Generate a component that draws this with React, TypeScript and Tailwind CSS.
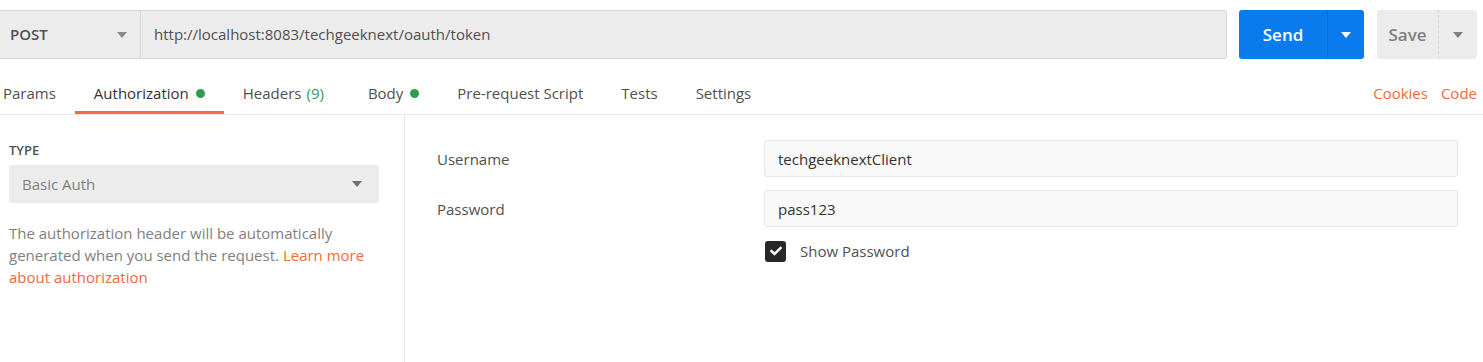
import { FaCheck } from "react-icons/fa";

const Caret = ({ className }: { className: string }) => (
  <svg width="10" height="6" viewBox="0 0 10 6" className={className}>
    <path d="M0 0h10L5 6z" fill="currentColor" />
  </svg>
);

const Dot = () => <span className="ml-[7px] inline-block size-[9px] rounded-full bg-[#2e9e4e]" />;

const tabs = [
  { label: "Params" },
  { label: "Authorization", dot: true, active: true },
  { label: "Headers", count: "(9)" },
  { label: "Body", dot: true },
  { label: "Pre-request Script" },
  { label: "Tests" },
  { label: "Settings" },
];

export default function App() {
  return (
    <div className="h-[362px] w-[1483px] overflow-hidden bg-white font-['Open_Sans',sans-serif] text-[15px] text-[#505050]">
      {/* request bar */}
      <div className="flex h-[59px] items-stretch pt-[10px] pr-[6px]">
        <div className="flex flex-1 rounded-r-[3px] border border-l-0 border-[#d6d6d6] bg-[#ececec]">
          <div className="flex w-[141px] items-center justify-between border-r border-[#d6d6d6] pl-[10px] pr-[13px]">
            <span className="font-semibold">POST</span>
            <Caret className="text-[#8a8a8a]" />
          </div>
          <div className="flex items-center pl-[13px]">http://localhost:8083/techgeeknext/oauth/token</div>
        </div>
        <div className="ml-[12px] flex w-[125px] overflow-hidden rounded-[3px] bg-[#097bed] text-white">
          <div className="flex w-[88px] items-center justify-center text-[17px] font-semibold">Send</div>
          <div className="flex flex-1 items-center justify-center border-l border-[#0a6cd1]">
            <Caret className="text-white" />
          </div>
        </div>
        <div className="ml-[13px] flex w-[100px] rounded-[3px] bg-[#ececec] text-[#808080]">
          <div className="flex w-[61px] items-center justify-center text-[17px] font-semibold">Save</div>
          <div className="flex flex-1 items-center justify-center border-l border-dashed border-[#d6d6d6]">
            <Caret className="text-[#808080]" />
          </div>
        </div>
      </div>

      {/* tabs */}
      <div className="flex h-[56px] items-stretch border-b border-[#e8e8e8] pr-[6px]">
        <div className="ml-[-16px] flex">
          {tabs.map((t) => (
            <div
              key={t.label}
              className={`flex items-center border-b-[3px] px-[19px] pt-[17px] ${
                t.active ? "border-[#f26b3a] text-[#333]" : "border-transparent"
              }`}
            >
              {t.label}
              {t.count && <span className="ml-[5px] mr-[6px] text-[#2e9e4e]">{t.count}</span>}
              {t.dot && <Dot />}
            </div>
          ))}
        </div>
        <div className="ml-auto flex items-center gap-[13px] pt-[17px] pb-[3px] text-[#f26b3a]">
          <span>Cookies</span>
          <span>Code</span>
        </div>
      </div>

      {/* body */}
      <div className="flex h-[247px]">
        <div className="w-[405px] border-r border-[#e8e8e8] pl-[9px] pr-[25px] pt-[27px]">
          <div className="text-[13px] font-semibold leading-[16px] text-[#505050]">TYPE</div>
          <div className="mt-[7px] flex h-[38px] items-center justify-between rounded-[3px] bg-[#ececec] pl-[13px] pr-[17px] text-[#808080]">
            <span>Basic Auth</span>
            <Caret className="text-[#707070]" />
          </div>
          <p className="mt-[19px] leading-[22px] text-[#808080]">
            The authorization header will be automatically generated when you send the request.{" "}
            <span className="text-[#f26b3a]">Learn more about authorization</span>
          </p>
        </div>
        <div className="flex-1 pl-[32px] pr-[25px] pt-[25px]">
          <div className="flex h-[37px] items-center">
            <span className="w-[327px] pt-[1px]">Username</span>
            <div className="flex h-full flex-1 items-center rounded-[3px] border border-[#e6e6e6] bg-[#f9f9f9] pl-[13px] pt-[1px] text-[#333]">
              techgeeknextClient
            </div>
          </div>
          <div className="mt-[13px] flex h-[37px] items-center">
            <span className="w-[327px] pt-[1px]">Password</span>
            <div className="flex h-full flex-1 items-center rounded-[3px] border border-[#e6e6e6] bg-[#f9f9f9] pl-[13px] pt-[1px] text-[#333]">
              pass123
            </div>
          </div>
          <div className="mt-[13px] flex items-center pl-[328px]">
            <div className="flex size-[21px] items-center justify-center rounded-[3px] bg-[#282828] text-white">
              <FaCheck size={12} />
            </div>
            <span className="ml-[14px]">Show Password</span>
          </div>
        </div>
      </div>
    </div>
  );
}
